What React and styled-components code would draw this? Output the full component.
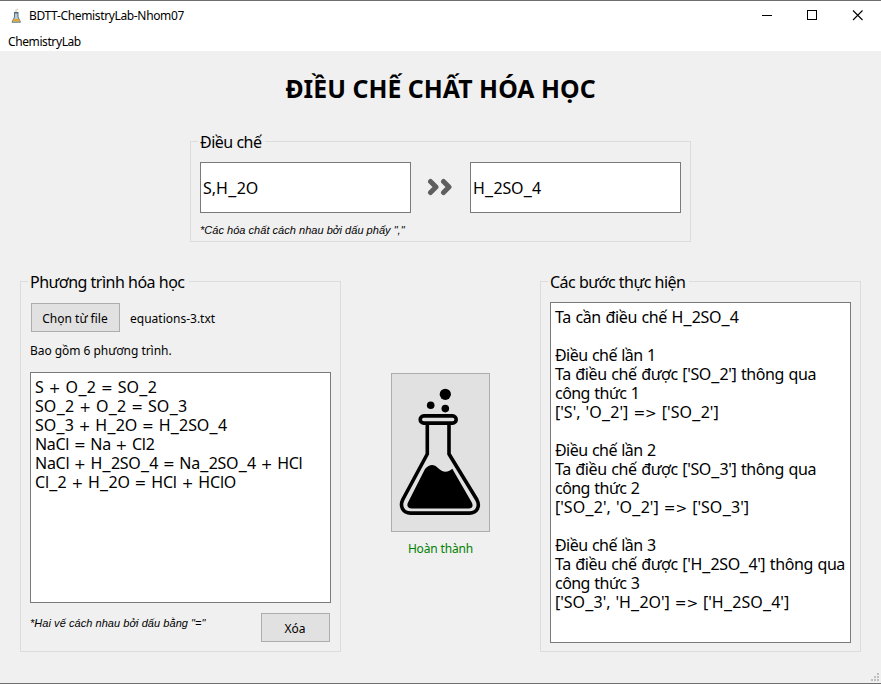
import React from "react";
import styled, { createGlobalStyle } from "styled-components";

const Global = createGlobalStyle`
  * { box-sizing: border-box; }
  body { margin: 0; background: #f0f0f0; }
`;
const Window = styled.div`
  width: 881px; height: 684px; display: flex; flex-direction: column;
  background: #f0f0f0; color: #000; border-top: 1px solid #6e6e6e; border-bottom: 1px solid #6e6e6e;
  font-family: "Noto Sans", sans-serif; font-size: 12px; overflow: hidden; position: relative;
`;
const Text = styled.span`
  display: block; white-space: pre; letter-spacing: ${(p) => p.$ls || 0}px;
`;
const TitleBar = styled.header`
  height: 30px; background: #fff; display: flex; align-items: center; padding-left: 10px; flex: none;
`;
const TitleText = styled(Text)`margin-left: 7px; flex: 1; line-height: 16px;`;
const Controls = styled.div`
  display: flex; svg { display: block; }
`;
const MenuBar = styled.nav`
  height: 20px; background: #fff; padding: 1px 0 0 8px; line-height: 20px; flex: none;
`;
const Body = styled.main`
  flex: 1; display: flex; flex-direction: column; align-items: center;
`;
const Heading = styled.h1`
  margin: 17px 0 0; height: 40px; line-height: 40px; font-size: 24.8px; font-weight: 700;
  letter-spacing: 0.04px; white-space: nowrap;
`;
const Group = styled.section`
  border: 1px solid #dcdcdc; width: ${(p) => p.$w}px; height: ${(p) => p.$h}px;
  padding: 0 9px; display: flex; flex-direction: column; flex: none;
`;
const GroupTitle = styled.h2`
  margin: -11px 0 0 -2px; padding: 0 4px 0 2px; height: 22px; line-height: 22px; font-size: 16px; font-weight: 400;
  background: #f0f0f0; align-self: flex-start; letter-spacing: -0.5px; white-space: nowrap;
`;
const Synthesis = styled(Group)`margin-top: 33px;`;
const Fields = styled.div`
  display: flex; align-items: center; margin-top: 9px; justify-content: space-between;
  > svg { margin-bottom: 2px; }
`;
const Field = styled.div`
  width: 211px; height: 51px; background: #fff; border: 1px solid #7a7a7a; padding: 1px 0 0 2px;
  font-size: 16px; line-height: 49px;
`;
const Hint = styled(Text)`
  font: italic 11px/14px "Liberation Sans", Arial, sans-serif;
  margin-top: ${(p) => p.$mt}px;
`;
const Columns = styled.div`
  width: 841px; margin-top: 39px; display: flex; justify-content: space-between;
`;
const Row = styled.div`
  display: flex; align-items: center; margin: 10px 0 0 1px; gap: 10px;
`;
const FileName = styled(Text)`padding-top: 2px;`;
const Button = styled.button`
  width: ${(p) => p.$w}px; height: 29px; padding: 2px 1px 0 0; margin: 0; border: 1px solid #adadad; background: #e1e1e1;
  color: #000; font: inherit; display: flex; align-items: center; justify-content: center; flex: none;
`;
const FlaskButton = styled(Button)`height: 159px; padding: 0;`;
const Count = styled(Text)`margin-top: 10px; line-height: 18px;`;
const TextArea = styled.div`
  width: 301px; height: ${(p) => p.$h}px; margin-top: ${(p) => p.$mt}px; flex: none;
  background: #fff; border: 1px solid #7a7a7a; padding: 5px 0 0 4px; font-size: 16px; line-height: 19px;
`;
const Line = styled(Text)`height: 19px; word-spacing: 0.85px;`;
const Operator = styled.span`
  font-family: "DejaVu Sans", sans-serif; font-size: 14px; line-height: 0; letter-spacing: 0;
`;
const Underscore = styled.span`font-size: 18px; padding: 0 0.35px; line-height: 0; letter-spacing: 0;`;
const Footer = styled.div`
  display: flex; justify-content: space-between; align-items: flex-start; margin: 10px 1px 0 0;
`;
const Center = styled.div`
  display: flex; flex-direction: column; align-items: center; width: 99px; margin-top: 92px;
`;
const Status = styled(Text)`color: #008000; margin-top: 8px; line-height: 18px;`;
const Grip = styled.svg`
  position: absolute; right: 2px; bottom: 2px;
`;

const equations = [
  ["S + O_2 = SO_2", 0],
  ["SO_2 + O_2 = SO_3", 0],
  ["SO_3 + H_2O = H_2SO_4", -0.12],
  ["NaCl = Na + Cl2", -0.3],
  ["NaCl + H_2SO_4 = Na_2SO_4 + HCl", -0.26],
  ["Cl_2 + H_2O = HCl + HClO", -0.16],
];
const steps = [
  ["Ta cần điều chế H_2SO_4", -0.38],
  ["", 0],
  ["Điều chế lần 1", -0.56],
  ["Ta điều chế được ['SO_2'] thông qua", -0.41],
  ["công thức 1", -0.55],
  ["['S', 'O_2'] => ['SO_2']", 0],
  ["", 0],
  ["Điều chế lần 2", -0.56],
  ["Ta điều chế được ['SO_3'] thông qua", -0.41],
  ["công thức 2", -0.55],
  ["['SO_2', 'O_2'] => ['SO_3']", 0],
  ["", 0],
  ["Điều chế lần 3", -0.56],
  ["Ta điều chế được ['H_2SO_4'] thông qua", -0.41],
  ["công thức 3", -0.55],
  ["['SO_3', 'H_2O'] => ['H_2SO_4']", -0.06],
];

const Formula = ({ text }) =>
  text.split(/([+=>]+|_)/).map((part, i) => {
    if (part === "_") return <Underscore key={i}>_</Underscore>;
    if (/^[+=>]+$/.test(part)) return <Operator key={i}>{part}</Operator>;
    return part;
  });
const Lines = ({ items }) => items.map(([t, ls], i) => <Line key={i} $ls={ls}><Formula text={t} /></Line>);

const AppIcon = () => (
  <svg width="12" height="16" viewBox="0 0 12 16">
    <path d="M4.500 5v4L2 14.200h8.500L8 9V5z" fill="#b5cbd8" stroke="#5c727f" />
    <path d="M3.600 11h5.200l1.300 2.500H2.400z" fill="#e2a52e" />
    <path d="M4 4.500h4.500" stroke="#506b7c" />
    <path d="M5 3h2M6.500 1.300H8" stroke="#d2b98a" />
  </svg>
);
const WindowControls = () => (
  <Controls>
    <svg width="120" height="30" viewBox="0 0 120 30" fill="none" stroke="#000">
      <path d="M1 14.500h10M46.500 9.500h9v9h-9z" shapeRendering="crispEdges" />
      <path d="M92 9.500l9.500 9.500M101.500 9.500l-9.500 9.500" strokeWidth="1.100" />
    </svg>
  </Controls>
);
const Chevrons = () => (
  <svg width="27" height="18" viewBox="0 0 27 18" fill="none" stroke="#5f5f5f" strokeWidth="5" strokeLinecap="round" strokeLinejoin="round">
    <path d="M3.500 3.500L9 9l-5.500 5.500M16.500 3.500L22 9l-5.500 5.500" />
  </svg>
);
const Flask = () => (
  <svg width="97" height="157" viewBox="0 0 97 157">
    <circle cx="53.300" cy="20.300" r="5.600" />
    <circle cx="38.700" cy="31.200" r="3.800" />
    <circle cx="53.300" cy="34.600" r="3.800" />
    <g fill="none" stroke="#000" strokeWidth="3.600" strokeLinejoin="round">
      <rect x="28.200" y="41.900" width="36" height="7.200" rx="3.600" />
      <path d="M35.300 49v31L10.800 125.500C7.500 132.500 11 139.100 18.500 139.100H77.500C85 139.100 88.500 132.500 84.800 125.500L57 80V49" />
    </g>
    <path d="M33 95C37.500 90 42 90 46 94C50.500 98.500 55.500 99 60.300 94.700L79.800 128.500C81.500 132 80.300 134.400 77 134.400H19.500C15.700 134.400 14.500 131.500 16 128.500Z" />
  </svg>
);

export default function App() {
  return (
    <Window>
      <Global />
      <TitleBar>
        <AppIcon />
        <TitleText $ls={-0.35}>BDTT-ChemistryLab-Nhom07</TitleText>
        <WindowControls />
      </TitleBar>
      <MenuBar><Text $ls={-0.4}>ChemistryLab</Text></MenuBar>
      <Body>
        <Heading>ĐIỀU CHẾ CHẤT HÓA HỌC</Heading>
        <Synthesis $w={501} $h={101}>
          <GroupTitle>Điều chế</GroupTitle>
          <Fields>
            <Field><Text><Formula text="S,H_2O" /></Text></Field>
            <Chevrons />
            <Field><Text $ls={-0.15}><Formula text="H_2SO_4" /></Text></Field>
          </Fields>
          <Hint $mt={10} $ls={0.03}>*Các hóa chất cách nhau bởi dấu phẩy ","</Hint>
        </Synthesis>
        <Columns>
          <Group $w={321} $h={371}>
            <GroupTitle>Phương trình hóa học</GroupTitle>
            <Row>
              <Button $w={89}><Text>Chọn từ file</Text></Button>
              <FileName>equations-3.txt</FileName>
            </Row>
            <Count $ls={-0.04}>Bao gồm 6 phương trình.</Count>
            <TextArea $h={231} $mt={12}><Lines items={equations} /></TextArea>
            <Footer>
              <Hint $mt={3} $ls={0.05}>*Hai vế cách nhau bởi dấu bằng "="</Hint>
              <Button $w={69}><Text>Xóa</Text></Button>
            </Footer>
          </Group>
          <Center>
            <FlaskButton $w={99}><Flask /></FlaskButton>
            <Status $ls={-0.15}>Hoàn thành</Status>
          </Center>
          <Group $w={321} $h={371}>
            <GroupTitle>Các bước thực hiện</GroupTitle>
            <TextArea $h={341} $mt={9}><Lines items={steps} /></TextArea>
          </Group>
        </Columns>
      </Body>
      <Grip width="8" height="8" viewBox="0 0 8 8" fill="#bfbfbf">
        <path d="M6 0h2v2h-2zM3 3h2v2h-2zM6 3h2v2h-2zM0 6h2v2h-2zM3 6h2v2h-2zM6 6h2v2h-2z" />
      </Grip>
    </Window>
  );
}
